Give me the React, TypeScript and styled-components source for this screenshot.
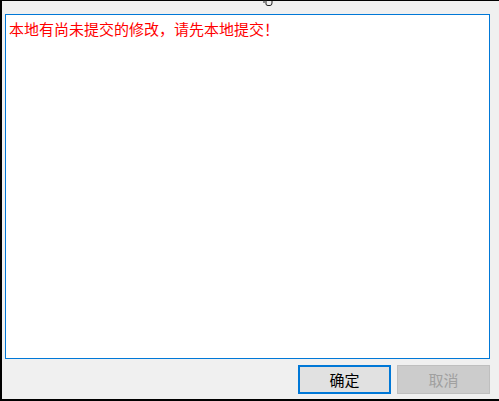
import styled, { createGlobalStyle } from "styled-components";

const GlobalStyle = createGlobalStyle`
  html, body {
    margin: 0;
    padding: 0;
    background: #f0f0f0;
  }
  body {
    font-family: "Noto Sans CJK SC", "Noto Sans", sans-serif;
  }
`;

export default function App() {
  return (
    <>
      <GlobalStyle />
      <S.Window>
        <S.Cursor width="10" height="6" viewBox="0 0 10 6">
          <path
            d="M1 0 L1 3 M3 0 L3 4 Q3 5.5 5 5.5 L7 5.5 Q9 5.5 9 3 L9 1"
            fill="none"
            stroke="#222"
            strokeWidth="1"
          />
        </S.Cursor>
        <S.MessageBox>
          <S.Message>本地有尚未提交的修改，请先本地提交！</S.Message>
        </S.MessageBox>
        <S.Footer>
          <S.Button $primary>确定</S.Button>
          <S.Button disabled>取消</S.Button>
        </S.Footer>
      </S.Window>
    </>
  );
}

const S = {
  Window: styled.div`
    position: relative;
    box-sizing: border-box;
    width: 499px;
    height: 401px;
    display: flex;
    flex-direction: column;
    background: #f0f0f0;
    border-left: 2px solid #000;
    border-top: 1px solid #000;
    border-bottom: 2px solid #000;
    padding: 13px 9px 5px 3px;
  `,
  Cursor: styled.svg`
    position: absolute;
    top: -1px;
    left: 261px;
  `,
  MessageBox: styled.div`
    box-sizing: border-box;
    height: 345px;
    background: #fff;
    border: 1px solid #0078d7;
    padding: 3px 3px;
  `,
  Message: styled.div`
    color: #ff0000;
    font-size: 15px;
    line-height: 22px;
  `,
  Footer: styled.div`
    display: flex;
    justify-content: flex-end;
    gap: 6px;
    margin-top: 6px;
  `,
  Button: styled.button<{ $primary?: boolean }>`
    box-sizing: border-box;
    width: 93px;
    height: 29px;
    padding: 0;
    font-family: "Noto Sans CJK SC", "Noto Sans", sans-serif;
    font-size: 15px;
    color: ${(p) => (p.$primary ? "#000" : "#a0a0a0")};
    background: ${(p) => (p.$primary ? "#e1e1e1" : "#cccccc")};
    border: ${(p) => (p.$primary ? "2px solid #0078d7" : "1px solid #bfbfbf")};
    border-radius: 0;
  `,
};
